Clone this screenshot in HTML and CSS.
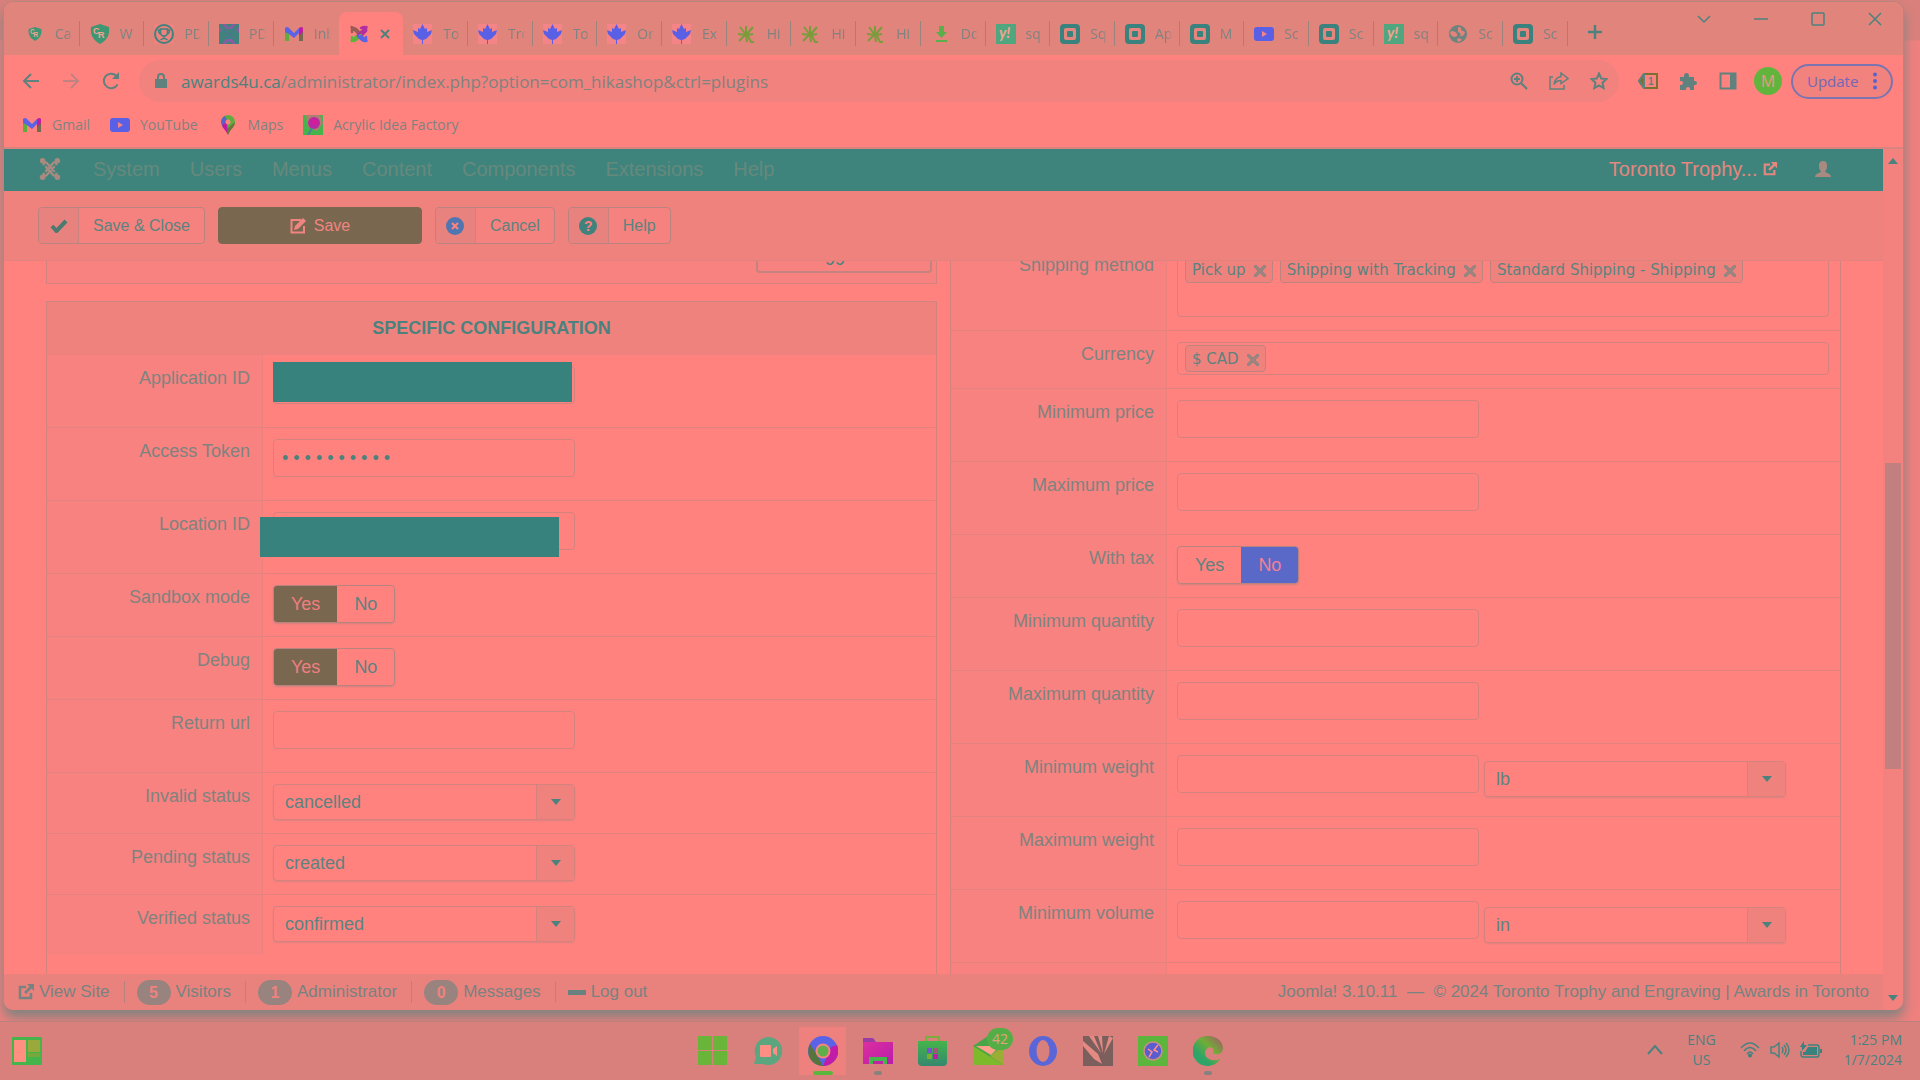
FILE: index.html
```html
<!DOCTYPE html>
<html lang="en">
<head>
    <meta charset="UTF-8">
    <meta name="viewport" content="width=device-width, initial-scale=1.0">
    <title>HikaShop - Plugins</title>
    <link rel="stylesheet" href="styles.css">
</head>
<body>
    <svg class="sprite" aria-hidden="true">
        <symbol id="shield" viewBox="0 0 20 20"><path d="M10 0 19 3c1 8-2 13-9 17C3 16 0 11 1 3z" fill="#3f9672"/><text x="3" y="10" font-family="Liberation Sans" font-weight="bold" font-size="9" fill="#f0a596">C</text><text x="8" y="14" font-family="Liberation Sans" font-weight="bold" font-size="9" fill="#f0a596">R</text></symbol>
        <symbol id="trophy" viewBox="0 0 20 20"><rect width="20" height="20" fill="#ef827e"/><circle cx="10" cy="10" r="9" fill="none" stroke="#3f827e" stroke-width="2"/><path d="M6.500 5h7v3q0 4-3.500 4T6.500 8zM6.500 6H4.500q0 4 3 4M13.500 6h2q0 4-3 4M10 12v2M6.500 16q3.500-3 7 0" fill="none" stroke="#3f827e" stroke-width="1.500"/></symbol>
        <symbol id="crest" viewBox="0 0 20 20"><rect width="20" height="20" fill="#3f827e"/><path d="M3 0h3l4 4 4-4h3l-4 5H7zM0 3l3 3-3 3zM20 3l-3 3 3 3zM3 20l4-5h6l4 5h-3l-4-3-4 3z" fill="#8a5ca5"/><path d="M5 6l4 5-3 3M15 6l-4 5 3 3" stroke="#5a6b9e" fill="none"/></symbol>
        <symbol id="gmail" viewBox="0 0 20 20"><path d="M1 5v12h4V8z" fill="#6a78a4"/><path d="M1 9v8h4V9z" fill="#5fae3c"/><path d="M19 5v12h-4V8z" fill="#7a6750"/><path d="M1 4q2-2 4 0l5 5 5-5v5l-5 5L1 7z" fill="#5a62e6"/><path d="M15 4q3-2 4 0v4l-4 4z" fill="#c01ca0"/></symbol>
        <symbol id="joomla" viewBox="0 0 20 20"><g fill="none" stroke-width="2.500" stroke-linecap="round"><path d="M2.500 3 12 12M3 8q-1-6 4-3l3 3" stroke="#9a5b55"/><path d="M17.500 3 8 12M12 4q6-3 5 3l-4 4" stroke="#b22fa0"/><path d="M2.500 17 8 12M3 13q-1 6 4 3l5-5" stroke="#62b33c"/><path d="M17.500 17 12 12M17 13q1 6-4 3L9 12" stroke="#5a62e6"/></g></symbol>
        <symbol id="joomla-mono" viewBox="0 0 22 26"><g fill="none" stroke="#a98a80" stroke-width="2.500"><path d="M4 9q0-4 3-3l9 10M18 9q0-4-3-3L6 16M4 17q0 4 3 3l9-10M18 17q0 4-3 3L6 10"/></g><g fill="#a98a80"><circle cx="3" cy="4" r="3"/><circle cx="19" cy="4" r="3"/><circle cx="3" cy="22" r="3"/><circle cx="19" cy="22" r="3"/></g></symbol>
        <symbol id="leaf" viewBox="0 0 20 20"><rect width="19" height="20" fill="#f58488"/><path d="M9.500 0 12 5l2-1v4l5-2-1 4-5 5-3 1v4H9v-4l-3-1-5-5-1-4 5 2V4l2 1z" fill="#5a60e6"/></symbol>
        <symbol id="hika" viewBox="0 0 20 20"><path d="M9 2v9l1 7M9 11 3 3M9 11 1 10M10 10l6-7M10 11l6-1M8 11 2 17M11 12l3 6h3" fill="none" stroke="#7a9c3c" stroke-width="2"/></symbol>
        <symbol id="download" viewBox="0 0 20 20"><path d="M8 2h5v6h3l-5.500 6L5 8h3zM5 16h11v2H5z" fill="#5cae4c"/></symbol>
        <symbol id="yahoo" viewBox="0 0 20 20"><rect width="20" height="20" fill="#50a67e"/><text x="3" y="14" font-family="Lato" font-weight="bold" font-style="italic" font-size="15" fill="#f3a394">y!</text></symbol>
        <symbol id="square" viewBox="0 0 20 20"><rect width="20" height="20" rx="4" fill="#3a827e"/><rect x="4" y="4" width="12" height="12" rx="2" fill="#e5857d"/><rect x="7" y="7" width="6" height="6" rx="1" fill="#3a827e"/></symbol>
        <symbol id="youtube" viewBox="0 0 20 20"><rect y="3" width="20" height="14" rx="3" fill="#5a60e6"/><path d="M8 7l5 3-5 3z" fill="#f5848a"/></symbol>
        <symbol id="globe" viewBox="0 0 20 20"><circle cx="10" cy="10" r="9" fill="#6d837e"/><path d="M3 7q5 0 6 3t-3 3q-3-1-4-4zM10 3q4 0 3 3l4 2q-1 5-5 4 2-3-2-4zM9 15q3-2 5 1l-4 2z" fill="#e1847c"/></symbol>
        <symbol id="pin" viewBox="0 0 20 20"><path d="M10 0a7 7 0 0 1 7 7c0 5-5 7-7 13C8 14 3 12 3 7a7 7 0 0 1 7-7z" fill="#5fae3c"/><path d="M3 7a7 7 0 0 1 4-6l3 6-5 6z" fill="#5a62c8"/><path d="M4 10 9 7l1 13C8 15 5 14 4 10z" fill="#c01ca0"/><path d="M17 7c0 5-5 7-7 13l-1-6z" fill="#6d7340"/><circle cx="10" cy="7" r="2.500" fill="#ff827f"/></symbol>
        <symbol id="acrylic" viewBox="0 0 20 20"><rect width="20" height="20" fill="#45b44a"/><path d="M3 0h14l3 8-6 8-9-4z" fill="#b07f74"/><circle cx="11" cy="8" r="6" fill="#b92aa0"/><circle cx="11" cy="7" r="3" fill="#d61c9a"/><path d="M9 13l-4 7" stroke="#4f7f9a" stroke-width="2"/></symbol>
        <symbol id="external" viewBox="0 0 16 16"><path d="M8 3H2v11h11V9" fill="none" stroke="currentColor" stroke-width="2.500"/><path d="M9 0h7v7l-2.500-2.500L8 10 6 8l5.500-5.500z" fill="currentColor"/></symbol>
        <symbol id="edit" viewBox="0 0 16 16"><path d="M11 2H1.500v12.500H14V8" fill="none" stroke="currentColor" stroke-width="2"/><path d="M4 12l1-4 8-8 3 3-8 8z" fill="currentColor"/></symbol>
    </svg>

    <div class="desktop">
        <div class="window">
            <div class="tabstrip">
                <div class="tabs">
                    <div class="tab"><svg class="favicon small"><use href="#shield"/></svg><span>Ca</span></div>
                    <div class="tab"><svg class="favicon"><use href="#shield"/></svg><span>W</span></div>
                    <div class="tab"><svg class="favicon"><use href="#trophy"/></svg><span>PD</span></div>
                    <div class="tab"><svg class="favicon"><use href="#crest"/></svg><span>PD</span></div>
                    <div class="tab last"><svg class="favicon"><use href="#gmail"/></svg><span>Inb</span></div>
                    <div class="tab active"><svg class="favicon"><use href="#joomla"/></svg><button class="close" aria-label="Close tab"><svg width="10" height="10" viewBox="0 0 10 10"><path d="M1 1l8 8M9 1 1 9" stroke="#4b827e" stroke-width="2"/></svg></button></div>
                    <div class="tab"><svg class="favicon"><use href="#leaf"/></svg><span>To</span></div>
                    <div class="tab"><svg class="favicon"><use href="#leaf"/></svg><span>Tro</span></div>
                    <div class="tab"><svg class="favicon"><use href="#leaf"/></svg><span>To</span></div>
                    <div class="tab"><svg class="favicon"><use href="#leaf"/></svg><span>Or</span></div>
                    <div class="tab"><svg class="favicon"><use href="#leaf"/></svg><span>Ex</span></div>
                    <div class="tab"><svg class="favicon"><use href="#hika"/></svg><span>Hi</span></div>
                    <div class="tab"><svg class="favicon"><use href="#hika"/></svg><span>Hi</span></div>
                    <div class="tab"><svg class="favicon"><use href="#hika"/></svg><span>Hi</span></div>
                    <div class="tab"><svg class="favicon"><use href="#download"/></svg><span>Do</span></div>
                    <div class="tab"><svg class="favicon"><use href="#yahoo"/></svg><span>sq</span></div>
                    <div class="tab"><svg class="favicon"><use href="#square"/></svg><span>Sq</span></div>
                    <div class="tab"><svg class="favicon"><use href="#square"/></svg><span>Ap</span></div>
                    <div class="tab"><svg class="favicon"><use href="#square"/></svg><span>M</span></div>
                    <div class="tab"><svg class="favicon"><use href="#youtube"/></svg><span>Sc</span></div>
                    <div class="tab"><svg class="favicon"><use href="#square"/></svg><span>Sc</span></div>
                    <div class="tab"><svg class="favicon"><use href="#yahoo"/></svg><span>sq</span></div>
                    <div class="tab"><svg class="favicon"><use href="#globe"/></svg><span>Sc</span></div>
                    <div class="tab"><svg class="favicon"><use href="#square"/></svg><span>Sc</span></div>
                </div>
                <button class="new-tab" aria-label="New tab"><svg width="16" height="16" viewBox="0 0 16 16"><path d="M8 1v14M1 8h14" stroke="#4b827e" stroke-width="2.500"/></svg></button>
                <div class="win-controls">
                    <button aria-label="Search tabs"><svg width="14" height="14" viewBox="0 0 14 14"><path d="M1 4l6 6 6-6"/></svg></button>
                    <button aria-label="Minimize"><svg width="14" height="14" viewBox="0 0 14 14"><path d="M0 7h14"/></svg></button>
                    <button aria-label="Maximize"><svg width="14" height="14" viewBox="0 0 14 14"><rect x="1" y="1" width="12" height="12" rx="1"/></svg></button>
                    <button aria-label="Close"><svg width="14" height="14" viewBox="0 0 14 14"><path d="M1 1l12 12M13 1 1 13"/></svg></button>
                </div>
            </div>

            <div class="navbar">
                <button class="icon-btn" aria-label="Back"><svg width="18" height="18" viewBox="0 0 18 18"><path d="M17 9H2M9 2 2 9l7 7"/></svg></button>
                <button class="icon-btn faded" aria-label="Forward"><svg width="18" height="18" viewBox="0 0 18 18"><path d="M1 9h15M9 2l7 7-7 7"/></svg></button>
                <button class="icon-btn" aria-label="Reload"><svg width="18" height="18" viewBox="0 0 18 18"><path d="M15.500 12.500A7.300 7.300 0 1 1 14 3.500l2 2"/><path d="M17 0v7h-7z" class="fill"/></svg></button>
                <div class="omnibox">
                    <svg class="lock" width="12" height="16" viewBox="0 0 12 16"><path d="M0 6h12v9H0z" fill="#5f827f"/><path d="M3 7V4q0-3 3-3t3 3v3" fill="none" stroke="#5f827f" stroke-width="2"/></svg>
                    <div class="url"><b>awards4u.ca</b>/administrator/index.php?option=com_hikashop&amp;ctrl=plugins</div>
                    <button class="icon-btn" aria-label="Zoom"><svg width="18" height="18" viewBox="0 0 18 18"><circle cx="7" cy="7" r="5.500"/><path d="M11 11l6 6M4 7h6M7 4v6"/></svg></button>
                    <button class="icon-btn" aria-label="Share"><svg width="20" height="18" viewBox="0 0 20 18"><path d="M4 5H1v12h14v-4" stroke-width="1.500"/><path d="M12 1l7 5.500-7 5V8.500q-5 0-7 4 1-7 7-8z" stroke-width="1.500"/></svg></button>
                    <button class="icon-btn" aria-label="Bookmark"><svg width="18" height="18" viewBox="0 0 18 18"><path d="M9 1.500l2.200 5 5.300.6-4 3.600 1.100 5.300L9 13.300 4.400 16l1.100-5.300-4-3.600 5.300-.6z"/></svg></button>
                </div>
                <div class="extensions">
                    <button class="icon-btn" aria-label="Tag extension"><svg width="20" height="16" viewBox="0 0 20 16"><path d="M6 1h13v14H6L1 8z" style="stroke:#7a7030"/><path d="M6 1v14L1 8z" fill="#7a7030"/><text x="10" y="12" font-family="Liberation Sans" font-weight="bold" font-size="10" fill="#5f827f">1</text></svg></button>
                    <button class="icon-btn" aria-label="Extensions"><svg width="18" height="18" viewBox="0 0 18 18"><path class="solid" d="M1 5h4V4q0-3 2.500-3T10 4v1h5v4h1q2 0 2 2t-2 2h-1v5h-4v-1q0-2-2-2t-2 2v1H1v-5h1q2 0 2-2T2 9H1z"/></svg></button>
                    <button class="icon-btn" aria-label="Side panel"><svg width="18" height="18" viewBox="0 0 18 18"><path d="M1.500 1.500h15v15h-15z"/><path d="M11 1h6v16h-6z" class="fill"/></svg></button>
                    <button class="icon-btn" aria-label="Profile"><span class="avatar">M</span></button>
                </div>
                <button class="update">Update <svg width="4" height="18" viewBox="0 0 4 18"><circle cx="2" cy="2.500" r="2"/><circle cx="2" cy="9" r="2"/><circle cx="2" cy="15.500" r="2"/></svg></button>
            </div>

            <div class="bookmarks">
                <a href="#"><svg class="favicon"><use href="#gmail"/></svg>Gmail</a>
                <a href="#"><svg class="favicon"><use href="#youtube"/></svg>YouTube</a>
                <a href="#"><svg class="favicon"><use href="#pin"/></svg>Maps</a>
                <a href="#"><svg class="favicon"><use href="#acrylic"/></svg>Acrylic Idea Factory</a>
            </div>

            <div class="viewport">
                <div class="page">
                    <nav class="admin-nav">
                        <svg class="logo" width="22" height="24"><use href="#joomla-mono"/></svg>
                        <a href="#">System</a>
                        <a href="#">Users</a>
                        <a href="#">Menus</a>
                        <a href="#">Content</a>
                        <a href="#">Components</a>
                        <a href="#">Extensions</a>
                        <a href="#">Help</a>
                        <a href="#" class="site">Toronto Trophy... <svg width="14" height="14"><use href="#external"/></svg></a>
                        <svg class="user" width="16" height="16" viewBox="0 0 16 16"><path d="M8 0q4 0 4 4.500T10 10q0 1 2 2 4 1 4 4H0q0-3 4-4 2-1 2-2-2-1-2-5.500T8 0z" fill="#a98a80"/></svg>
                    </nav>

                    <div class="toolbar">
                        <button class="btn"><span class="ico"><svg width="18" height="14" viewBox="0 0 18 14"><path d="M2 7l4.500 5L16 2" fill="none" stroke="#4b7a70" stroke-width="4"/></svg></span><span class="txt">Save &amp; Close</span></button>
                        <button class="btn btn-save"><svg width="16" height="16"><use href="#edit"/></svg>Save</button>
                        <button class="btn"><span class="ico"><svg width="18" height="18" viewBox="0 0 18 18"><circle cx="9" cy="9" r="9" fill="#4f76b0"/><path d="M6 6l6 6M12 6l-6 6" stroke="#ff827f" stroke-width="2"/></svg></span><span class="txt">Cancel</span></button>
                        <button class="btn"><span class="ico"><svg width="18" height="18" viewBox="0 0 18 18"><circle cx="9" cy="9" r="9" fill="#3f827e"/><text x="5" y="14" font-family="Liberation Sans" font-weight="bold" font-size="14" fill="#ff827f">?</text></svg></span><span class="txt">Help</span></button>
                    </div>

                    <div class="content">
                        <div class="columns">
                            <div class="column">
                                <div class="panel tail"><button class="counter">99</button></div>
                                <div class="panel">
                                    <h2>SPECIFIC CONFIGURATION</h2>
                                    <div class="row">
                                        <label for="app-id">Application ID</label>
                                        <div class="field"><input type="text" id="app-id"><span class="redacted over-app"></span></div>
                                    </div>
                                    <div class="row">
                                        <label for="token">Access Token</label>
                                        <div class="field"><input type="text" id="token" value="• • • • • • • • • •"></div>
                                    </div>
                                    <div class="row">
                                        <label for="loc-id">Location ID</label>
                                        <div class="field"><input type="text" id="loc-id"><span class="redacted over-loc"></span></div>
                                    </div>
                                    <div class="row">
                                        <span class="label">Sandbox mode</span>
                                        <div class="field"><div class="toggle"><button class="on">Yes</button><button>No</button></div></div>
                                    </div>
                                    <div class="row">
                                        <span class="label">Debug</span>
                                        <div class="field"><div class="toggle"><button class="on">Yes</button><button>No</button></div></div>
                                    </div>
                                    <div class="row">
                                        <label for="url">Return url</label>
                                        <div class="field"><input type="text" id="url"></div>
                                    </div>
                                    <div class="row">
                                        <label for="invalid">Invalid status</label>
                                        <div class="field"><div class="select"><select id="invalid"><option>cancelled</option></select><i></i></div></div>
                                    </div>
                                    <div class="row">
                                        <label for="pending">Pending status</label>
                                        <div class="field"><div class="select"><select id="pending"><option>created</option></select><i></i></div></div>
                                    </div>
                                    <div class="row end">
                                        <label for="verified">Verified status</label>
                                        <div class="field"><div class="select"><select id="verified"><option>confirmed</option></select><i></i></div></div>
                                    </div>
                                    <div class="spacer"></div>
                                </div>
                            </div>

                            <div class="column">
                                <div class="panel">
                                    <div class="row">
                                        <span class="label">Shipping method</span>
                                        <div class="field">
                                            <div class="chips tall">
                                                <span class="chip">Pick up <button aria-label="Remove"></button></span>
                                                <span class="chip">Shipping with Tracking <button aria-label="Remove"></button></span>
                                                <span class="chip">Standard Shipping - Shipping <button aria-label="Remove"></button></span>
                                            </div>
                                        </div>
                                    </div>
                                    <div class="row">
                                        <span class="label">Currency</span>
                                        <div class="field">
                                            <div class="chips"><span class="chip">$ CAD <button aria-label="Remove"></button></span></div>
                                        </div>
                                    </div>
                                    <div class="row">
                                        <label for="min-price">Minimum price</label>
                                        <div class="field"><input type="text" id="min-price"></div>
                                    </div>
                                    <div class="row">
                                        <label for="max-price">Maximum price</label>
                                        <div class="field"><input type="text" id="max-price"></div>
                                    </div>
                                    <div class="row">
                                        <span class="label">With tax</span>
                                        <div class="field"><div class="toggle"><button>Yes</button><button class="off">No</button></div></div>
                                    </div>
                                    <div class="row">
                                        <label for="min-qty">Minimum quantity</label>
                                        <div class="field"><input type="text" id="min-qty"></div>
                                    </div>
                                    <div class="row">
                                        <label for="max-qty">Maximum quantity</label>
                                        <div class="field"><input type="text" id="max-qty"></div>
                                    </div>
                                    <div class="row">
                                        <label for="min-weight">Minimum weight</label>
                                        <div class="field"><input type="text" id="min-weight"><div class="select"><select aria-label="Weight unit"><option>lb</option></select><i></i></div></div>
                                    </div>
                                    <div class="row">
                                        <label for="max-weight">Maximum weight</label>
                                        <div class="field"><input type="text" id="max-weight"></div>
                                    </div>
                                    <div class="row">
                                        <label for="min-volume">Minimum volume</label>
                                        <div class="field"><input type="text" id="min-volume"><div class="select"><select aria-label="Volume unit"><option>in</option></select><i></i></div></div>
                                    </div>
                                    <div class="row">
                                        <span class="label"></span>
                                        <div class="field"><input type="text" aria-label="Maximum volume"></div>
                                    </div>
                                </div>
                            </div>
                        </div>
                    </div>

                    <footer class="status">
                        <a href="#"><svg width="16" height="16"><use href="#external"/></svg>View Site</a>
                        <span><b>5</b>Visitors</span>
                        <span><b>1</b>Administrator</span>
                        <a href="#"><b>0</b>Messages</a>
                        <a href="#"><i class="minus"></i>Log out</a>
                        <p>Joomla! 3.10.11 &nbsp;—&nbsp; © 2024 Toronto Trophy and Engraving | Awards in Toronto</p>
                    </footer>
                </div>

                <div class="scrollbar">
                    <i class="up"></i>
                    <div class="before"></div>
                    <div class="thumb"></div>
                    <div class="after"></div>
                    <i class="down"></i>
                </div>
            </div>
        </div>
    </div>

    <div class="taskbar">
        <div class="widgets"><svg width="30" height="28" viewBox="0 0 30 28"><rect width="30" height="28" rx="1" fill="#45b44a"/><rect x="2" y="3" width="12" height="22" fill="#ff8f80"/><rect x="16" y="3" width="12" height="12" fill="#9aa83c"/><rect x="16" y="16" width="12" height="4" fill="#78a83c"/></svg></div>
        <div class="apps">
            <div class="app"><svg viewBox="0 0 30 30"><path d="M0 0h14v14H0zM15 0h14v14H15zM0 15h14v14H0zM15 15h14v14H15z" fill="#68b53a"/></svg></div>
            <div class="app"><svg viewBox="0 0 30 30"><path d="M15 1a14 14 0 1 1-5 27H1l2-7A14 14 0 0 1 15 1z" fill="#5ba57f"/><rect x="7" y="9" width="11" height="12" rx="1" fill="#ff8f85"/><path d="M20 13l4-3v10l-4-3z" fill="#ff8f85"/></svg></div>
            <div class="app current"><svg viewBox="0 0 30 30"><circle cx="15" cy="15" r="15" fill="#5a62e6"/><path d="M2 8l7 11 6 11A15 15 0 0 1 2 8z" fill="#56753a"/><path d="M15 30l8-19 6-2a15 15 0 0 1-14 21z" fill="#c01ca8"/><circle cx="15" cy="15" r="7.500" fill="#f58580"/><circle cx="15" cy="15" r="5.500" fill="#5fae4a"/></svg></div>
            <div class="app open"><svg viewBox="0 0 30 30"><linearGradient id="g-folder" x1="0" y1="0" x2="1" y2="1"><stop offset="0" stop-color="#dd2f9f"/><stop offset="1" stop-color="#b81cab"/></linearGradient><path d="M0 2h10l3 4H0z" fill="#9a3ca5"/><path d="M0 6h30v22H0z" fill="url(#g-folder)"/><path d="M6 28v-7h18v7h-4v-3H10v3z" fill="#45b44a"/></svg></div>
            <div class="app"><svg viewBox="0 0 30 30"><linearGradient id="g-store" x1="0" y1="0" x2="0" y2="1"><stop offset="0" stop-color="#45b44a"/><stop offset="1" stop-color="#35886f"/></linearGradient><path d="M8 6V1h13v5" fill="none" stroke="#7aae3c" stroke-width="2"/><path d="M0 5h29v21q0 4-4 4H4q-4 0-4-4z" fill="url(#g-store)"/><path d="M9 12h5v5H9z" fill="#7a52d0"/><path d="M15 12h5v5h-5z" fill="#a5557a"/><path d="M9 18h5v5H9z" fill="#7fae2c"/><path d="M15 18h5v5h-5z" fill="#c01ca8"/></svg></div>
            <div class="app"><svg viewBox="0 0 30 30"><path d="M0 10 15 0l15 10v19H0z" fill="#4aa548"/><path d="M3 10h24l-9 9z" fill="#ffa08a"/><path d="M0 10 30 29H0z" fill="#7cba2c"/><path d="M30 10v19L17 20z" fill="#9aad35"/></svg><span class="badge">42</span></div>
            <div class="app"><svg viewBox="0 0 30 30"><path fill-rule="evenodd" d="M15 0a14 15 0 0 1 0 30a14 15 0 0 1 0-30zM15 4a6.500 11 0 0 0 0 22a6.500 11 0 0 0 0-22z" fill="#5a66d8"/></svg></div>
            <div class="app"><svg viewBox="0 0 30 30"><rect width="30" height="30" fill="#7a5f5c"/><path d="M0 5l15 13 4 10-8-5L0 10zM6 0l12 17L11 0zM15 0l5 17L19 0zM30 2l-9 16 5-18z" fill="#e58a83"/></svg></div>
            <div class="app"><svg viewBox="0 0 30 30"><rect width="30" height="30" fill="#5cb53c"/><circle cx="15" cy="15" r="9" fill="#5a5cd0" stroke="#c98f80" stroke-width="1.500"/><path d="M10 13l4 3-3 5M20 9l-4 5 4 2" fill="none" stroke="#ff908a" stroke-width="1.500"/></svg></div>
            <div class="app open"><svg viewBox="0 0 30 30"><linearGradient id="g-edge" x1="0" y1="1" x2="1" y2="0"><stop offset="0.3" stop-color="#2fa468"/><stop offset="0.6" stop-color="#6fae35"/><stop offset="1" stop-color="#a9506c"/></linearGradient><path d="M15 0c9 0 15 6 15 12 0 5-4 7-8 6-3-1-1-3-2-5-2-4-8-1-8 4 0 6 8 9 15 6-3 5-8 7-13 7A15 15 0 1 1 15 0z" fill="url(#g-edge)"/></svg></div>
        </div>
        <div class="tray">
            <svg width="16" height="10" viewBox="0 0 16 10"><path d="M1 9l7-8 7 8" fill="none" stroke="#4b827e" stroke-width="2"/></svg>
            <div class="lang">ENG<br>US</div>
            <svg width="20" height="16" viewBox="0 0 20 16"><g fill="none" stroke="#4b827e" stroke-width="1.500"><path d="M1 6q9-10 18 0M4 9q6-7 12 0M7 12q3-4 6 0"/></g><circle cx="10" cy="13.500" r="2" fill="#3a827e"/></svg>
            <svg width="20" height="18" viewBox="0 0 20 18"><g fill="none" stroke="#4b827e" stroke-width="1.500"><path d="M1 6v6h3l5 4V2L4 6zM12 6q2 3 0 6M14 4q4 5 0 10M16 2q6 7 0 14"/></g></svg>
            <svg width="22" height="18" viewBox="0 0 22 18"><path d="M8 4h9q2 0 2 3v6q0 3-2 3H3q-2 0-2-3v-3" fill="none" stroke="#3a827e" stroke-width="1.500"/><path d="M8 6h9v8H3v-3h2zM20 8h2v4h-2zM4 0v4h3L2 10V6H0z" fill="#3a827e"/></svg>
            <div class="clock">1:25 PM<br>1/7/2024</div>
        </div>
    </div>
</body>
</html>
```

FILE: styles.css
```css
* {
    box-sizing: border-box;
}

body {
    margin: 0;
    height: 100vh;
    display: flex;
    flex-direction: column;
    overflow: hidden;
    background-color: #d9807c;
    color: #7f8380;
    font-family: "Open Sans", "Noto Sans", sans-serif;
    font-size: 14px;
}

button {
    font: inherit;
    color: inherit;
    background: none;
    border: 0;
    padding: 0;
}

a {
    color: inherit;
    text-decoration: none;
}

.sprite {
    display: none;
}

.desktop {
    flex: 1;
    min-height: 0;
    padding: 1px 16px 11px 3px;
    background: linear-gradient(#d9807c 40px, #ee807e 41px);
    overflow: hidden;
}

.window {
    height: 100%;
    display: flex;
    flex-direction: column;
    border: 1px solid #b7847e;
    border-bottom: 0;
    border-radius: 10px;
    background-color: #ff827f;
    box-shadow: 0 8px 12px #84837f;
    overflow: hidden;
}

/* Browser tabs */
.tabstrip {
    display: flex;
    height: 53px;
    flex: none;
    padding-left: 11px;
    background-color: #e1847c;
}

.tabs {
    display: flex;
    flex: 0 1 1553px;
    min-width: 0;
    padding-top: 10px;
}

.tab {
    flex: 1;
    min-width: 0;
    display: flex;
    align-items: center;
    gap: 10px;
    padding-left: 10px;
    background: linear-gradient(#9b847e, #9b847e) right 9px / 1px 25px no-repeat;
}

.tab span {
    width: 17px;
    overflow: hidden;
    white-space: nowrap;
    mask-image: linear-gradient(to right, #000 75%, transparent);
}

.tab.last {
    background: none;
}

.tab.active {
    background: #ff827f;
    border-radius: 8px 8px 0 0;
}

.favicon {
    width: 20px;
    height: 20px;
    flex: none;
}

.favicon.small {
    padding: 3px;
}

.close {
    display: flex;
    padding: 1px;
}

.new-tab {
    width: 54px;
    padding-top: 10px;
}

.win-controls {
    display: flex;
    margin-left: auto;
    height: 37px;
}

.win-controls button {
    width: 57px;
}

.win-controls svg {
    fill: none;
    stroke: #4b827e;
    stroke-width: 1.5;
}

/* Address row */
.navbar {
    display: flex;
    flex: none;
    align-items: center;
    padding: 5px 10px 0 7px;
}

.icon-btn {
    width: 40px;
    height: 36px;
    display: flex;
    flex: none;
    align-items: center;
    justify-content: center;
}

.icon-btn svg {
    fill: none;
    stroke: #5f827f;
    stroke-width: 2;
}

.icon-btn svg text {
    stroke: none;
}

.icon-btn .fill,
.icon-btn .solid {
    fill: #5f827f;
    stroke: none;
}

.icon-btn.faded svg {
    stroke: #c08380;
}

.omnibox {
    flex: 1;
    display: flex;
    align-items: center;
    height: 42px;
    margin-left: 8px;
    padding: 0 0 0 16px;
    border-radius: 21px;
    background-color: #f1827e;
}

.lock {
    margin-right: 14px;
}

.url {
    flex: 1;
    font-size: 17px;
}

.url b {
    font-weight: normal;
    color: #4b827e;
}

.extensions {
    display: flex;
    margin-left: 9px;
}

.avatar {
    width: 28px;
    height: 28px;
    line-height: 28px;
    border-radius: 50%;
    background-color: #62b53c;
    color: #e59a80;
    font-size: 16px;
}

.update {
    display: flex;
    align-items: center;
    justify-content: space-between;
    width: 102px;
    height: 35px;
    margin-left: 3px;
    padding: 0 14px;
    border: 2px solid #7b74b0;
    border-radius: 18px;
    background-color: #f1827e;
    color: #7468b8;
    font-size: 15px;
}

.update svg {
    fill: #5a62d0;
}

.bookmarks {
    display: flex;
    flex: none;
    align-items: center;
    gap: 20px;
    height: 47px;
    padding-left: 18px;
    border-bottom: 2px solid #d9847e;
}

.bookmarks a {
    display: flex;
    align-items: center;
    gap: 10px;
}

/* Joomla admin page */
.viewport {
    flex: 1;
    display: flex;
    min-height: 0;
}

.page {
    flex: 1;
    min-width: 0;
    display: flex;
    flex-direction: column;
    font-family: "Liberation Sans", Arial, sans-serif;
    font-size: 18px;
}

.admin-nav {
    display: flex;
    flex: none;
    align-items: center;
    gap: 30px;
    height: 42px;
    padding: 0 52px 2px 35px;
    background-color: #3e847d;
    color: #67897c;
    font-size: 20px;
}

.logo {
    margin-right: 2px;
}

.admin-nav .site {
    margin-left: auto;
    color: #e5877f;
}

.user {
    margin-left: 8px;
}

.toolbar {
    display: flex;
    flex: none;
    gap: 13px;
    padding: 16px 34px;
    border-bottom: 1px solid #e0827e;
    background-color: #f0827e;
}

.btn {
    display: flex;
    align-items: center;
    height: 37px;
    border: 1px solid #b9837f;
    border-radius: 4px;
    background-color: #f5827e;
    color: #5d827f;
    font-size: 16px;
    overflow: hidden;
}

.btn .ico {
    display: flex;
    align-items: center;
    justify-content: center;
    width: 40px;
    height: 100%;
    border-right: 1px solid #c9837f;
    background-color: #e8827e;
}

.btn .txt {
    padding: 0 14px;
}

.btn-save {
    width: 204px;
    justify-content: center;
    gap: 8px;
    border-color: #7a6750;
    background-color: #7a6750;
    color: #ef8580;
}

.content {
    flex: 1;
    min-height: 0;
    padding: 0 42px;
    overflow: hidden;
}

/* the form is scrolled, its first rows sit under the toolbar */
.columns {
    display: flex;
    gap: 13px;
    margin-top: -19px;
}

.column {
    flex: 1;
    min-width: 0;
}

.panel {
    border: 1px solid #d3827e;
    border-top-width: 0;
}

.panel.tail {
    display: flex;
    justify-content: flex-end;
    height: 42px;
    margin-bottom: 17px;
    padding: 0 4px 10px 0;
    background-color: #f7827f;
}

.panel.tail + .panel {
    border-top-width: 1px;
}

.counter {
    width: 176px;
    padding: 3px 18px 0 0;
    border: 2px solid #c5837f;
    border-radius: 4px;
    color: #4b827e;
    font-size: 18px;
}

.panel h2 {
    margin: 0;
    line-height: 52px;
    border-bottom: 1px solid #ec827e;
    background-color: #f0827e;
    color: #4b827e;
    font-size: 18px;
    text-align: center;
}

.row {
    display: flex;
    border-bottom: 1px solid #e3827e;
}

.row.end {
    border-bottom: 0;
}

.row label,
.row .label {
    width: 216px;
    flex: none;
    padding: 12px 12px 0 0;
    line-height: 22px;
    border-right: 1px solid #ec827e;
    background-color: #f7827f;
    text-align: right;
}

.field {
    position: relative;
    flex: 1;
    min-width: 0;
    display: flex;
    align-items: center;
    gap: 5px;
    padding: 11px 11px 13px 10px;
}

input,
.select {
    width: 302px;
    border: 1px solid #d3827e;
    border-radius: 4px;
    background-color: #ff827f;
}

input {
    height: 38px;
    margin: 0 0 10px;
    padding: 0 8px;
    color: #4b827e;
    font-family: inherit;
    font-size: 18px;
}

.redacted {
    position: absolute;
    width: 299px;
    height: 40px;
    background-color: #37827d;
}

.redacted.over-app {
    left: 10px;
    top: 7px;
}

.redacted.over-loc {
    left: -3px;
    top: 16px;
}

.select {
    display: flex;
    height: 36px;
    box-shadow: 0 1px 2px #e0827e;
}

.select select {
    flex: 1;
    appearance: none;
    border: 0;
    padding: 0 11px;
    background: none;
    color: #5d827f;
    font-family: inherit;
    font-size: 18px;
}

.select i {
    width: 38px;
    display: flex;
    align-items: center;
    justify-content: center;
    border-left: 1px solid #d3827e;
    background-color: #f0827e;
}

.select i::before {
    content: "";
    border: 5px solid transparent;
    border-top: 6px solid #4b827e;
    border-bottom: 0;
}

.toggle {
    display: flex;
    height: 38px;
    border: 1px solid #b9837f;
    border-radius: 4px;
    box-shadow: 0 1px 2px #d0827e;
    color: #5d827f;
    overflow: hidden;
}

.toggle button {
    padding: 0 17px;
}

.toggle .on {
    background-color: #7a6750;
    color: #ee7f80;
}

.toggle .off {
    background-color: #5a69c8;
    color: #f57f96;
}

.chips {
    flex: 1;
    display: flex;
    align-items: flex-start;
    gap: 7px;
    height: 33px;
    padding: 2px 7px;
    border: 1px solid #d3827e;
    border-radius: 4px;
}

.chips.tall {
    height: 64px;
}

.chip {
    display: flex;
    align-items: center;
    height: 27px;
    padding: 0 6px;
    border: 1px solid #bd837f;
    border-radius: 4px;
    background-color: #f0827e;
    color: #5d827f;
    font-family: "DejaVu Sans", Verdana, sans-serif;
    font-size: 15px;
    white-space: nowrap;
}

.chip button {
    width: 12px;
    height: 12px;
    margin: 3px 0 0 8px;
    background:
        linear-gradient(45deg, transparent 40%, #9b837f 40%, #9b837f 60%, transparent 60%),
        linear-gradient(-45deg, transparent 40%, #9b837f 40%, #9b837f 60%, transparent 60%);
}

.spacer {
    height: 60px;
}

/* Status bar */
.status {
    display: flex;
    flex: none;
    align-items: center;
    height: 36px;
    padding: 0 14px;
    background-color: #e9827d;
    color: #788280;
    font-size: 17px;
}

.status a,
.status span {
    display: flex;
    align-items: center;
    gap: 5px;
    padding-right: 14px;
}

.status span,
.status a + a,
.status span + a {
    padding-left: 13px;
    background: linear-gradient(#b5837e, #b5837e) left center / 1px 22px no-repeat;
}

.status b {
    width: 34px;
    line-height: 25px;
    border-radius: 13px;
    background-color: #98837f;
    color: #f0827e;
    font-size: 16px;
    text-align: center;
}

.status .minus {
    width: 18px;
    height: 5px;
    background-color: #6a827f;
}

.status p {
    margin: 0 0 0 auto;
}

.scrollbar {
    display: flex;
    flex-direction: column;
    width: 20px;
    flex: none;
    background-color: #f3827e;
}

.scrollbar i {
    height: 24px;
    display: flex;
    align-items: center;
    justify-content: center;
}

.scrollbar i::before {
    content: "";
    border: 5px solid transparent;
}

.scrollbar .up::before {
    border-bottom: 6px solid #4b827e;
    border-top: 0;
}

.scrollbar .down::before {
    border-top: 6px solid #4b827e;
    border-bottom: 0;
}

.scrollbar .before {
    flex: 290;
}

.scrollbar .thumb {
    flex: 306;
    margin: 0 2px;
    background-color: #c17f7f;
}

.scrollbar .after {
    flex: 217;
}

/* Windows taskbar */
.taskbar {
    display: grid;
    grid-template-columns: 1fr auto 1fr;
    align-items: center;
    height: 59px;
    flex: none;
    border-top: 1px solid #b9807c;
    background-color: #d9807d;
    color: #4b827e;
}

.widgets {
    padding-left: 12px;
}

.widgets svg {
    display: block;
}

.apps {
    display: flex;
}

.app {
    position: relative;
    width: 55px;
    height: 58px;
    display: flex;
    align-items: center;
    justify-content: center;
}

.app svg {
    width: 30px;
    height: 30px;
}

.app.current {
    background: linear-gradient(#ee807e, #ee807e) center / 47px 48px no-repeat;
}

.app.current::after,
.app.open::after {
    content: "";
    position: absolute;
    bottom: 5px;
    width: 8px;
    height: 4px;
    border-radius: 2px;
    background-color: #85827f;
}

.app.current::after {
    width: 20px;
    background-color: #5cb53c;
}

.badge {
    position: absolute;
    top: 6px;
    right: 2px;
    width: 26px;
    line-height: 22px;
    border-radius: 11px;
    background-color: #55ad45;
    color: #e5a080;
    text-align: center;
}

.tray {
    display: flex;
    justify-content: flex-end;
    align-items: center;
    gap: 10px;
    padding: 0 18px 2px 0;
    line-height: 20px;
}

.lang {
    margin: 0 14px;
    text-align: center;
}

.clock {
    margin-left: 12px;
    text-align: right;
}
```
